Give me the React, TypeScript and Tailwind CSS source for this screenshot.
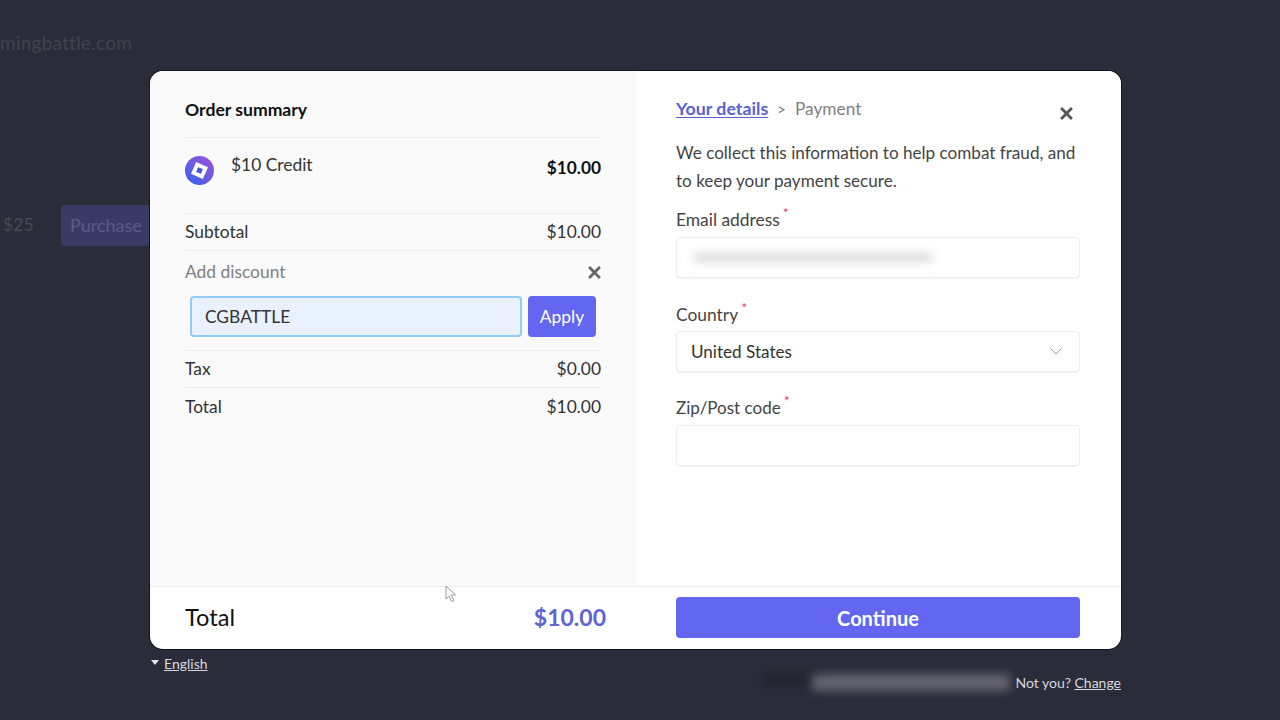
import React from "react";

const Star = () => (
  <span className="text-[#e0445f] text-[14px] leading-none ml-[3px] relative top-[-1px]">*</span>
);

const Cross = ({ color, size }: { color: string; size: number }) => (
  <svg width={size} height={size} viewBox="0 0 12 12" fill="none" stroke={color} strokeWidth="2.6">
    <path d="M1 1l10 10M11 1L1 11" />
  </svg>
);

function Row({ left, right, cls }: { left: string; right: string; cls: string }) {
  return (
    <div className={`flex items-center justify-between text-[#333] ${cls}`}>
      <span>{left}</span>
      <span>{right}</span>
    </div>
  );
}

function OrderSummary() {
  return (
    <div className="w-[486px] bg-[#fafafa] pl-[35px] pr-[35px] flex flex-col">
      <div className="h-[67px] border-b border-[#ececec] pt-[26px] text-[17.6px] leading-[26px] font-bold text-[#111]">
        Order summary
      </div>
      <div className="h-[76px] border-b border-[#ececec] flex items-start justify-between">
        <div className="flex items-start">
          <svg width="29" height="29" viewBox="0 0 29 29" className="mt-[18px]">
            <defs>
              <linearGradient id="logoGrad" x1="0" y1="1" x2="1" y2="0">
                <stop offset="0" stopColor="#2f66ec" />
                <stop offset="1" stopColor="#a54fdc" />
              </linearGradient>
            </defs>
            <circle cx="14.5" cy="14.5" r="14.5" fill="url(#logoGrad)" />
            <path d="M11.2 6L23 11.2L17.8 23L6 17.8Z" fill="#fff" />
            <path d="M13 11.2L17.8 13L16 17.8L11.2 16Z" fill="#4a55d8" />
          </svg>
          <span className="ml-[17px] mt-[14px] text-[17.4px] leading-[26px] text-[#333]">$10 Credit</span>
        </div>
        <span className="mt-[17px] text-[17.3px] leading-[26px] font-bold text-[#111]">$10.00</span>
      </div>
      <Row left="Subtotal" right="$10.00" cls="h-[37px] border-b border-[#ececec] text-[17.4px]" />
      <div className="h-[43px] flex items-center justify-between text-[17.4px] text-[#808080]">
        <span>Add discount</span>
        <Cross color="#666" size={13} />
      </div>
      <div className="h-[57px] border-b border-[#ececec] flex items-start pl-[5px] pr-[5px] pt-[2px] gap-[6px]">
        <div className="w-[332px] h-[41px] bg-[#e8f1fd] border-2 border-[#8fcdf7] rounded-[4px] pl-[13px] pt-[1px] flex items-center text-[17.4px] text-[#333]">
          CGBATTLE
        </div>
        <button className="w-[68px] h-[41px] bg-[#6366f1] rounded-[4px] pt-[1px] text-white text-[17.4px]">Apply</button>
      </div>
      <Row left="Tax" right="$0.00" cls="h-[37px] border-b border-[#ececec] text-[17.4px]" />
      <Row left="Total" right="$10.00" cls="h-[38px] text-[17.4px]" />
    </div>
  );
}

function Field({ children }: { children?: React.ReactNode }) {
  return (
    <div className="h-[41px] w-[404px] bg-white border border-[#eeeeee] rounded-[4px] shadow-[0_1px_1px_rgba(0,0,0,0.05)] flex items-center justify-between pl-[14px] pr-[17px] text-[17.1px] text-[#333]">
      {children}
    </div>
  );
}

function Label({ text, cls }: { text: string; cls: string }) {
  return (
    <div className={`flex items-start leading-[26px] text-[#444] ${cls}`}>
      {text}
      <Star />
    </div>
  );
}

function Details() {
  return (
    <div className="flex-1 bg-white pl-[40px] pr-[41px] flex flex-col">
      <div className="relative pt-[25px] h-[68px] flex items-start text-[17.3px] leading-[26px]">
        <span className="font-bold text-[17.8px] leading-[25px] text-[#5a5fd6] underline underline-offset-2">Your details</span>
        <span className="text-[#777] ml-[9px] mr-[9px] text-[15px]">&gt;</span>
        <span className="text-[#808080]">Payment</span>
        <span className="absolute right-[7px] top-[36px]">
          <Cross color="#555" size={13} />
        </span>
      </div>
      <p className="text-[17.1px] leading-[28px] text-[#444]">
        We collect this information to help combat fraud, and
        <br />
        to keep your payment secure.
      </p>
      <Label text="Email address" cls="mt-[12px] h-[30px] text-[17.4px]" />
      <Field>
        <span className="w-[240px] h-[9px] ml-[2px] rounded-full bg-[#dadada] blur-[5px]" />
      </Field>
      <Label text="Country" cls="mt-[24px] h-[29px] text-[17.4px]" />
      <Field>
        <span>United States</span>
        <svg width="12" height="7" viewBox="0 0 12 7" fill="none" stroke="#a0a0a0" strokeWidth="1">
          <path d="M0.5 0.5L6 6L11.5 0.5" />
        </svg>
      </Field>
      <Label text="Zip/Post code" cls="mt-[23px] h-[30px] text-[17px]" />
      <Field />
    </div>
  );
}

export default function App() {
  return (
    <div className="relative w-[1280px] h-[720px] overflow-hidden bg-[#2a2c39] pt-[71px] pl-[150px] font-['Lato','Liberation_Sans',sans-serif]">
      {/* dimmed page behind the dialog */}
      <span className="absolute left-0 top-[31px] text-[19px] tracking-[0.25px] leading-[24px] text-[#41434f]">
        mingbattle.com
      </span>
      <span className="absolute left-[3px] top-[213px] text-[17.6px] leading-[24px] text-[#494b56]">$25</span>
      <div className="absolute left-[61px] top-[205px] w-[100px] h-[41px] rounded-[4px] bg-[#3a3a66] pl-[9px] flex items-center text-[18px] text-[#5b5c84]">
        Purchase
      </div>
      <span className="absolute left-[765px] top-[672px] w-[60px] h-[14px] bg-[#24252f] blur-[4px]" />

      <div className="relative w-[971px] h-[578px] bg-white rounded-[13px] ring-1 ring-[#15161d] flex flex-col overflow-hidden">
        <div className="h-[515px] flex">
          <OrderSummary />
          <Details />
        </div>
        <div className="h-[63px] border-t border-[#eeeeee] flex items-start pt-[10px]">
          <div className="w-[486px] h-[41px] pl-[35px] pr-[30px] flex items-center justify-between">
            <span className="text-[23.6px] text-[#111]">Total</span>
            <span className="text-[23px] font-bold text-[#5f63d8]">$10.00</span>
          </div>
          <button className="ml-[40px] w-[404px] h-[41px] bg-[#6366f1] rounded-[4px] text-white text-[20px] font-bold">
            Continue
          </button>
        </div>
        <svg className="absolute left-[295px] top-[514px]" width="12" height="18" viewBox="0 0 12 18" fill="#fff" stroke="#9a9a9a" strokeWidth="1">
          <path d="M1 1v13l3-3 2.5 5.5 2.5-1L6 10h4.5z" />
        </svg>
      </div>

      <div className="w-[971px] flex items-start justify-between text-[14px] text-[#d8d9de]">
        <div className="flex items-center mt-[4px] h-[20px] pl-[1px]">
          <span className="w-0 h-0 border-x-[4px] border-x-transparent border-t-[5px] border-t-[#e5e5e5] mr-[5px] mb-[1px]" />
          <span className="underline">English</span>
        </div>
        <div className="flex items-center mt-[23px] h-[20px]">
          <span className="w-[198px] h-[17px] mr-[5px] rounded-[2px] bg-[#62636e] blur-[5px]" />
          <span>
            Not you? <span className="underline">Change</span>
          </span>
        </div>
      </div>
    </div>
  );
}
